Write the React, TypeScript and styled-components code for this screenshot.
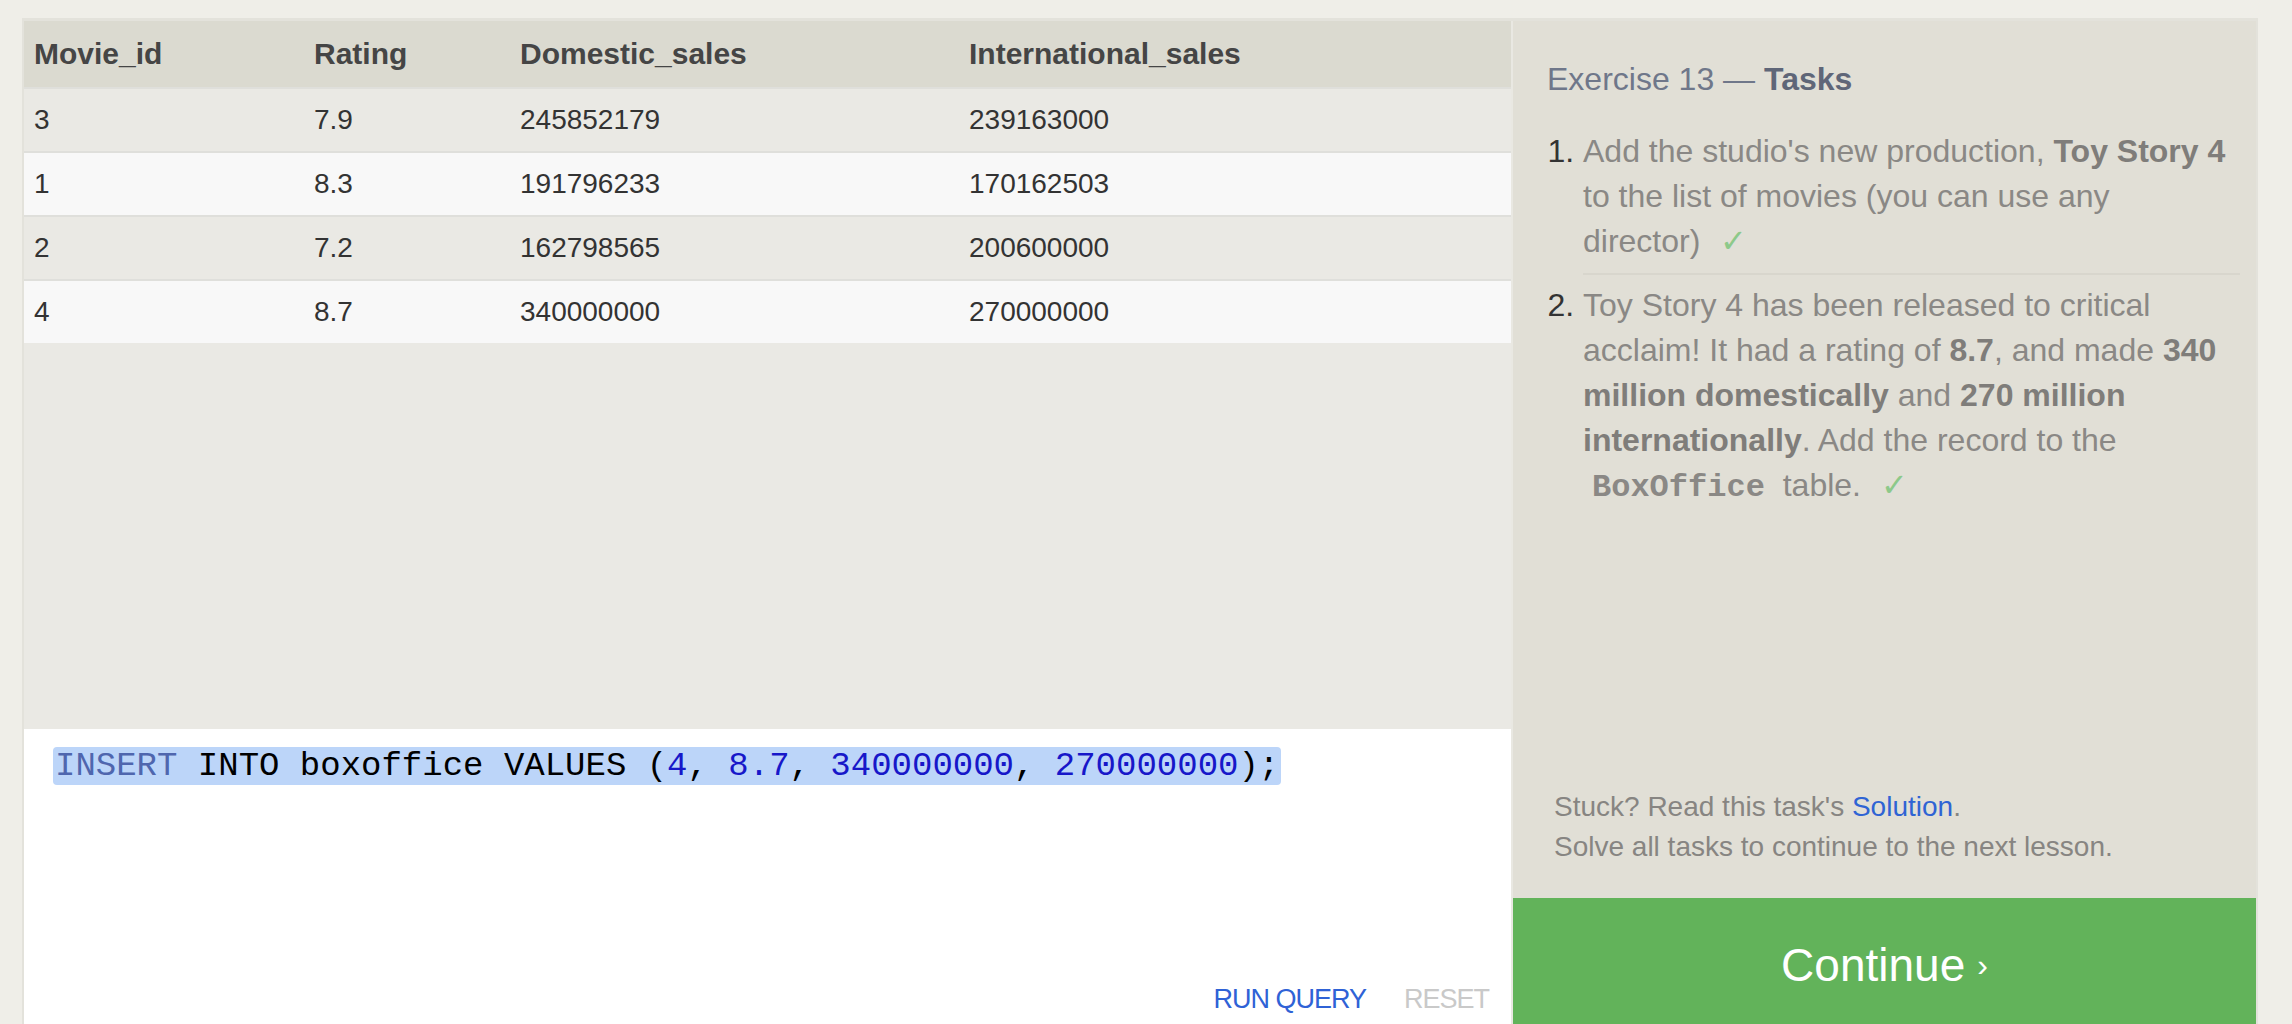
import React from "react";
import styled, { createGlobalStyle } from "styled-components";

const GlobalStyle = createGlobalStyle`
  html, body {
    margin: 0;
    padding: 0;
    background: #efeee8;
  }
  body {
    font-family: "Liberation Sans", Arial, sans-serif;
  }
  * {
    box-sizing: border-box;
  }
`;

const Frame = styled.div`
  margin: 18px 34px 0 22px;
  display: grid;
  grid-template-columns: 1487px 1fr;
  border: 2px solid #e3e2db;
  border-top-width: 3px;
  border-bottom: none;
`;

const LeftColumn = styled.div`
  display: flex;
  flex-direction: column;
`;

const Results = styled.div`
  height: 708px;
  background: #eae9e4;
`;

type RowVariant = "head" | "odd" | "even";

const rowBg: Record<RowVariant, string> = {
  head: "#dbdad0",
  odd: "#eae9e4",
  even: "#f8f8f8",
};

const TableRow = styled.div<{ $variant: RowVariant }>`
  display: grid;
  grid-template-columns: 280px 206px 449px 1fr;
  align-items: center;
  height: ${(p) => (p.$variant === "head" ? "66px" : "64px")};
  background: ${(p) => rowBg[p.$variant]};
  border-top: ${(p) => (p.$variant === "head" ? "none" : "2px solid #dfdfdb")};
`;

const HeadCell = styled.div`
  padding-left: 10px;
  font-size: 30px;
  font-weight: 700;
  color: #454545;
`;

const Cell = styled.div`
  padding-left: 10px;
  font-size: 28px;
  color: #333;
`;

const Editor = styled.div`
  height: 303px;
  background: #fff;
  display: flex;
  flex-direction: column;
  justify-content: space-between;
  padding: 18px 22px 13px 31px;
`;

const CodeLine = styled.div`
  font-family: "Liberation Mono", "Courier New", monospace;
  font-size: 34px;
  line-height: normal;
  white-space: pre;
  color: #000;
`;

const Selection = styled.span`
  background: #bcd5f9;
  border-radius: 4px;
  padding: 0 2px;
  margin-left: -2px;
`;

const Token = styled.span<{ $kind: "keyword" | "number" }>`
  color: ${(p) => (p.$kind === "keyword" ? "#4f66ae" : "#1717c9")};
`;

const Actions = styled.div`
  display: flex;
  justify-content: flex-end;
  gap: 38px;
`;

const ActionButton = styled.button<{ $muted?: boolean }>`
  background: none;
  border: none;
  padding: 0;
  font-family: "Liberation Sans", Arial, sans-serif;
  font-size: 27px;
  letter-spacing: -1px;
  line-height: 40px;
  color: ${(p) => (p.$muted ? "#c9c9c9" : "#2f62d6")};
  cursor: pointer;
`;

const RightPanel = styled.div`
  display: flex;
  flex-direction: column;
  height: 1011px;
  background: #e1dfd6;
  border-left: 2px solid #e9e8e2;
`;

const Title = styled.h2`
  margin: 0;
  padding: 38px 16px 0 34px;
  font-size: 32px;
  line-height: 40px;
  font-weight: 400;
  color: #6f778a;
`;

const TitleStrong = styled.strong`
  font-weight: 700;
  color: #5f6678;
`;

const TaskList = styled.ol`
  margin: 30px 16px 0 34px;
  padding-left: 36px;
  font-size: 32px;
  line-height: 45px;
  color: #8a8885;
`;

const TaskItem = styled.li`
  padding: 0 9px 9px 0;
  &::marker {
    color: #333;
  }
  & + & {
    border-top: 2px solid #d8d6cd;
    padding-top: 8px;
  }
`;

const Strong = styled.strong`
  font-weight: 700;
  color: #7f7d7a;
`;

const InlineCode = styled.code`
  font-family: "Liberation Mono", "Courier New", monospace;
  font-weight: 700;
  font-size: 32px;
  padding: 0 9px;
  color: #8a8885;
`;

const Check = styled.span`
  margin-left: 20px;
  color: #8dc98a;
`;

const Spacer = styled.div`
  flex: 1;
`;

const Stuck = styled.div`
  padding: 0 16px 31px 41px;
  font-size: 28px;
  line-height: 40px;
  color: #878582;
`;

const SolutionLink = styled.a`
  color: #2f64d4;
  text-decoration: none;
`;

const ContinueButton = styled.button`
  height: 134px;
  border: none;
  background: #62b35a;
  color: #fff;
  font-family: "Liberation Sans", Arial, sans-serif;
  font-size: 46px;
  display: flex;
  align-items: center;
  justify-content: center;
  cursor: pointer;
`;

const Chevron = styled.span`
  font-size: 32px;
  margin-left: 12px;
`;

const rows: Array<[string, string, string, string]> = [
  ["3", "7.9", "245852179", "239163000"],
  ["1", "8.3", "191796233", "170162503"],
  ["2", "7.2", "162798565", "200600000"],
  ["4", "8.7", "340000000", "270000000"],
];

const headers = ["Movie_id", "Rating", "Domestic_sales", "International_sales"];

export default function App() {
  return (
    <>
      <GlobalStyle />
      <Frame>
        <LeftColumn>
          <Results>
            <TableRow $variant="head">
              {headers.map((h) => (
                <HeadCell key={h}>{h}</HeadCell>
              ))}
            </TableRow>
            {rows.map((r, i) => (
              <TableRow key={i} $variant={i % 2 === 0 ? "odd" : "even"}>
                {r.map((c, j) => (
                  <Cell key={j}>{c}</Cell>
                ))}
              </TableRow>
            ))}
          </Results>
          <Editor>
            <CodeLine>
              <Selection>
                <Token $kind="keyword">INSERT</Token> INTO boxoffice VALUES (
                <Token $kind="number">4</Token>, <Token $kind="number">8.7</Token>,{" "}
                <Token $kind="number">340000000</Token>,{" "}
                <Token $kind="number">270000000</Token>);
              </Selection>
            </CodeLine>
            <Actions>
              <ActionButton>RUN QUERY</ActionButton>
              <ActionButton $muted>RESET</ActionButton>
            </Actions>
          </Editor>
        </LeftColumn>
        <RightPanel>
          <Title>
            Exercise 13 — <TitleStrong>Tasks</TitleStrong>
          </Title>
          <TaskList>
            <TaskItem>
              Add the studio's new production, <Strong>Toy Story 4</Strong> to the list of
              movies (you can use any director)
              <Check>✓</Check>
            </TaskItem>
            <TaskItem>
              Toy Story 4 has been released to critical acclaim! It had a rating of{" "}
              <Strong>8.7</Strong>, and made <Strong>340 million domestically</Strong> and{" "}
              <Strong>270 million internationally</Strong>. Add the record to the{" "}
              <InlineCode>BoxOffice</InlineCode> table.
              <Check>✓</Check>
            </TaskItem>
          </TaskList>
          <Spacer />
          <Stuck>
            Stuck? Read this task's <SolutionLink href="#">Solution</SolutionLink>.
            <br />
            Solve all tasks to continue to the next lesson.
          </Stuck>
          <ContinueButton>
            Continue<Chevron>›</Chevron>
          </ContinueButton>
        </RightPanel>
      </Frame>
    </>
  );
}
